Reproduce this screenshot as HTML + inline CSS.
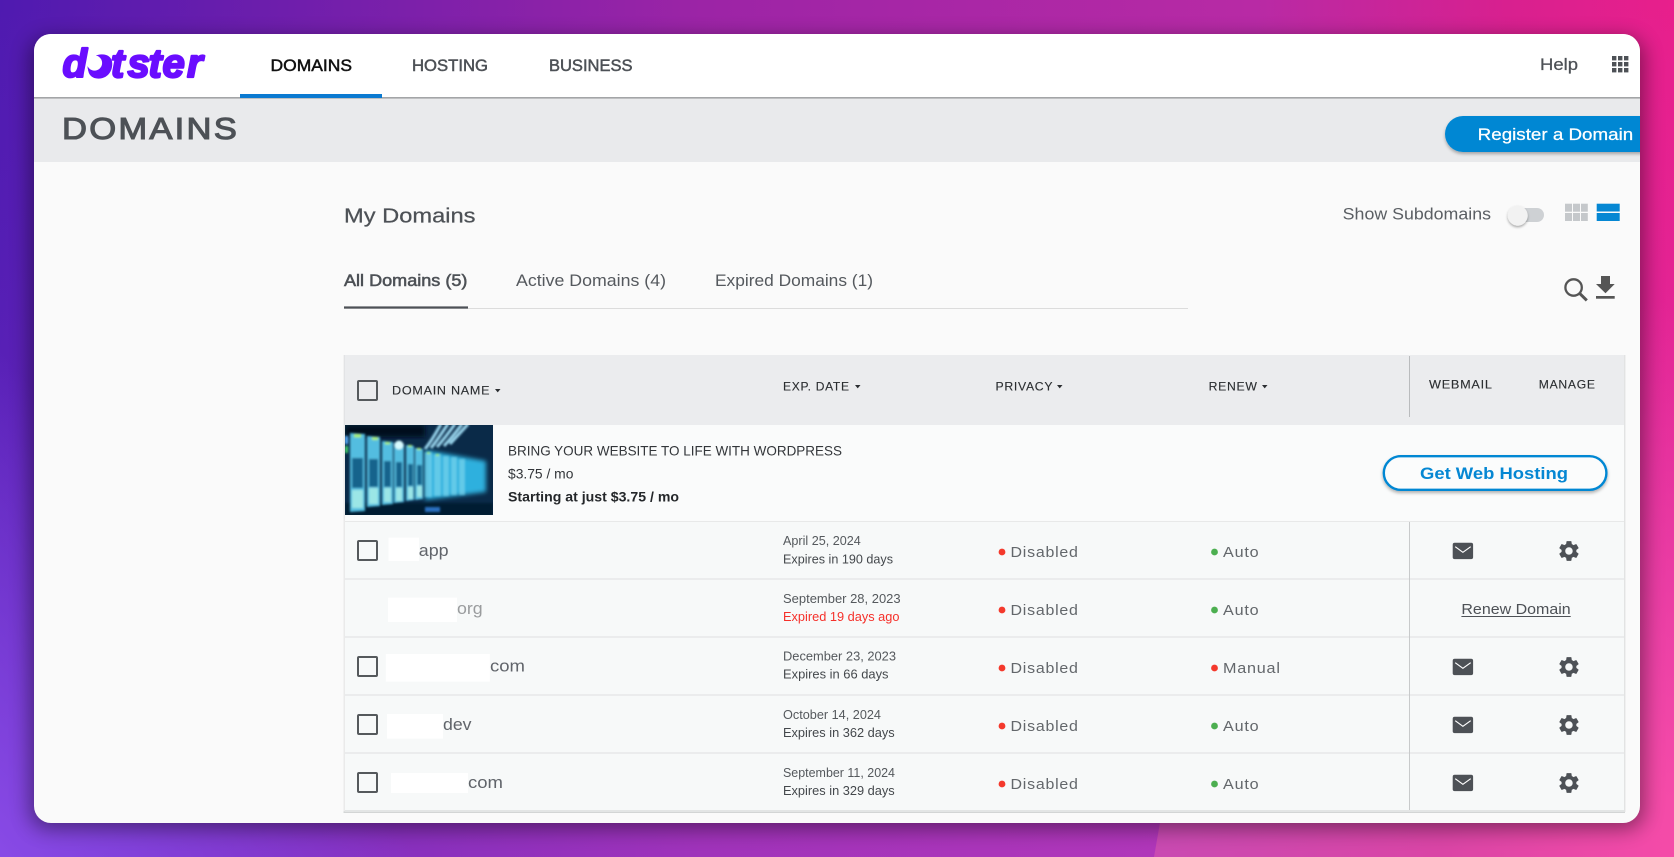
<!DOCTYPE html>
<html lang="en"><head><meta charset="utf-8"><title>Dotster Domains</title>
<style>
html,body{margin:0;padding:0;width:1674px;height:857px;overflow:hidden;background:#8a2ab0}
svg{display:block;position:absolute;left:0;top:0}
text{font-family:"Liberation Sans",sans-serif;white-space:pre}
.n{font-size:17px;fill:#4d5156;stroke:#4d5156;stroke-width:.5}
.l{font-size:17px;fill:#5a5e63}
.h{font-size:12px;fill:#2b2e31;stroke:#2b2e31;stroke-width:.12;letter-spacing:.7px}
.d1{font-size:12.5px;fill:#55595d}
.d2{font-size:12.5px;fill:#44484c}
.s{font-size:14.5px;fill:#63676b;letter-spacing:.7px}
.dm{font-size:17px;fill:#60646a}
</style></head><body>
<svg width="1674" height="857" viewBox="0 0 1674 857" xmlns="http://www.w3.org/2000/svg">
<defs>
<linearGradient id="bgx" x1="0" x2="1" y1="0" y2="0">
<stop offset="0" stop-color="#4f1ab0"/><stop offset=".42" stop-color="#9c24a6"/><stop offset=".75" stop-color="#b82aa5"/><stop offset=".9" stop-color="#d8208f"/><stop offset="1" stop-color="#e81f8c"/>
</linearGradient>
<linearGradient id="bgy" x1="0" x2="0" y1="0" y2="1">
<stop offset="0" stop-color="#aa5af0" stop-opacity="0"/><stop offset=".3" stop-color="#aa5af0" stop-opacity=".06"/><stop offset="1" stop-color="#aa5af0" stop-opacity=".28"/>
</linearGradient>
<linearGradient id="bgl" gradientUnits="userSpaceOnUse" x1="0" y1="857" x2="250" y2="650">
<stop offset="0" stop-color="#8a4ce8" stop-opacity=".95"/><stop offset="1" stop-color="#8a4ce8" stop-opacity="0"/>
</linearGradient>
<linearGradient id="bgp" x1="0" x2="1" y1="0" y2="0">
<stop offset="0" stop-color="#c94ab2"/><stop offset=".55" stop-color="#da45a6"/><stop offset="1" stop-color="#f54ba8"/>
</linearGradient>
<linearGradient id="bgp2" x1="0" x2="0" y1="0" y2="1">
<stop offset="0" stop-color="#f54ba8" stop-opacity="0"/><stop offset="1" stop-color="#f54ba8" stop-opacity="1"/>
</linearGradient>
<clipPath id="win"><rect x="34" y="34" width="1606" height="789" rx="17"/></clipPath>
<filter id="wsh" x="-5%" y="-5%" width="110%" height="110%"><feGaussianBlur stdDeviation="10"/></filter>
<filter id="bsh" x="-10%" y="-30%" width="120%" height="170%"><feDropShadow dx="0" dy="2" stdDeviation="1.6" flood-color="#000" flood-opacity=".3"/></filter>
<filter id="ks" x="-50%" y="-50%" width="200%" height="200%"><feDropShadow dx="0" dy="1.5" stdDeviation="1.3" flood-color="#000" flood-opacity=".35"/></filter>
<filter id="b1" x="-10%" y="-10%" width="120%" height="120%"><feGaussianBlur stdDeviation="1"/></filter>
<filter id="b3" x="-20%" y="-20%" width="140%" height="140%"><feGaussianBlur stdDeviation="2.5"/></filter>
<clipPath id="img"><rect x="345" y="425" width="148" height="90"/></clipPath>
<g id="mail"><rect x="0" y="0" width="20.4" height="16.4" rx="2" fill="#4d5156"/><path d="M2.5 4l7.7 5.6 7.8-5.6" fill="none" stroke="#fff" stroke-width="1.2"/></g>
<path id="gear" fill="#4d5156" fill-rule="evenodd" d="M19.14 12.94c.04-.3.06-.61.06-.94 0-.32-.02-.64-.07-.94l2.03-1.58c.18-.14.23-.41.12-.61l-1.92-3.32c-.12-.22-.37-.29-.59-.22l-2.39.96c-.5-.38-1.03-.7-1.62-.94l-.36-2.54c-.04-.24-.24-.41-.48-.41h-3.84c-.24 0-.43.17-.47.41l-.36 2.54c-.59.24-1.13.57-1.62.94l-2.39-.96c-.22-.08-.47 0-.59.22L2.74 8.87c-.12.21-.08.47.12.61l2.03 1.58c-.05.3-.09.63-.09.94s.02.64.07.94l-2.03 1.58c-.18.14-.23.41-.12.61l1.92 3.32c.12.22.37.29.59.22l2.39-.96c.5.38 1.03.7 1.62.94l.36 2.54c.05.24.24.41.48.41h3.84c.24 0 .44-.17.47-.41l.36-2.54c.59-.24 1.13-.56 1.62-.94l2.39.96c.22.08.47 0 .59-.22l1.92-3.32c.12-.22.07-.47-.12-.61l-2.01-1.58zM12 15.6c-1.98 0-3.6-1.62-3.6-3.6s1.62-3.6 3.6-3.6 3.6 1.62 3.6 3.6-1.62 3.6-3.6 3.6z"/>
<rect id="cb" x="0" y="0" width="19" height="19" rx="1" fill="none" stroke="#55595c" stroke-width="2"/>
</defs>

<!-- background -->
<rect width="1674" height="857" fill="url(#bgx)"/>
<rect width="1674" height="857" fill="url(#bgy)"/>
<rect width="600" height="857" fill="url(#bgl)"/>
<rect x="1640" y="300" width="34" height="500" fill="url(#bgp2)"/>
<polygon points="1164,800 1674,800 1674,857 1154,857" fill="url(#bgp)"/>
<rect x="30" y="38" width="1614" height="791" rx="18" fill="#000" opacity=".42" filter="url(#wsh)"/>

<g clip-path="url(#win)">
<rect x="34" y="34" width="1606" height="789" fill="#fafafa"/>
<!-- header -->
<rect x="34" y="34" width="1606" height="63" fill="#fff"/>
<rect x="34" y="97" width="1606" height="65" fill="#e9eaec"/>
<rect x="34" y="97" width="1606" height="1.6" fill="#a3a5a7"/>
<rect x="240" y="94" width="142" height="4" fill="#0b7ad1"/>

<!-- logo -->
<circle cx="99" cy="66.5" r="11.5" fill="#6a0dff"/>
<text x="62.5 88 111 127.5 148.5 162.5 187" y="77" font-size="40" font-weight="700" font-style="italic" fill="#6a0dff" stroke="#6a0dff" stroke-width="2.2" stroke-linejoin="round" style="font-weight:700;font-style:italic">dotster</text>
<circle cx="94.5" cy="63" r="7.6" fill="#fff"/>

<!-- nav -->
<text x="270.5" y="71" font-size="17" fill="#111" stroke="#111" stroke-width=".5" textLength="81.5" lengthAdjust="spacingAndGlyphs">DOMAINS</text>
<text class="n" x="412" y="71" textLength="76" lengthAdjust="spacingAndGlyphs">HOSTING</text>
<text class="n" x="549" y="71" textLength="83.5" lengthAdjust="spacingAndGlyphs">BUSINESS</text>
<text class="n" x="1540" y="70" textLength="38" lengthAdjust="spacingAndGlyphs" style="stroke-width:.25">Help</text>
<g fill="#4d5156">
<rect x="1612" y="56" width="4.4" height="4.4"/><rect x="1618" y="56" width="4.4" height="4.4"/><rect x="1624" y="56" width="4.4" height="4.4"/>
<rect x="1612" y="62" width="4.4" height="4.4"/><rect x="1618" y="62" width="4.4" height="4.4"/><rect x="1624" y="62" width="4.4" height="4.4"/>
<rect x="1612" y="68" width="4.4" height="4.4"/><rect x="1618" y="68" width="4.4" height="4.4"/><rect x="1624" y="68" width="4.4" height="4.4"/>
</g>

<!-- title -->
<text x="62" y="139" font-size="31" fill="#4d5156" stroke="#4d5156" stroke-width="1.1" style="letter-spacing:2px" textLength="177" lengthAdjust="spacingAndGlyphs">DOMAINS</text>
<rect x="1445" y="116" width="240" height="36" rx="18" fill="#0587d3" filter="url(#bsh)"/>
<text x="1477.7" y="140" font-size="17" fill="#fff" stroke="#fff" stroke-width=".25" textLength="155.5" lengthAdjust="spacingAndGlyphs">Register a Domain</text>

<!-- my domains -->
<text x="344" y="222.5" font-size="20" fill="#4d5156" stroke="#4d5156" stroke-width=".25" textLength="131.5" lengthAdjust="spacingAndGlyphs">My Domains</text>
<text class="l" x="1342.7" y="219.3" textLength="148.3" lengthAdjust="spacingAndGlyphs">Show Subdomains</text>
<rect x="1508" y="208" width="36" height="14" rx="7" fill="#ced1d4"/>
<circle cx="1517.7" cy="215.6" r="10" fill="#f2f2f2" filter="url(#ks)"/>
<g fill="#c5c8cb">
<rect x="1565" y="203.7" width="7" height="8"/><rect x="1573" y="203.7" width="7" height="8"/><rect x="1581" y="203.7" width="6.8" height="8"/>
<rect x="1565" y="213" width="7" height="8"/><rect x="1573" y="213" width="7" height="8"/><rect x="1581" y="213" width="6.8" height="8"/>
</g>
<rect x="1596.7" y="203.7" width="23" height="7.8" fill="#0587d3"/>
<rect x="1596.7" y="213" width="23" height="8" fill="#0587d3"/>

<!-- tabs -->
<text x="344" y="286" font-size="16.5" fill="#4d5156" stroke="#4d5156" stroke-width=".55" textLength="123.4" lengthAdjust="spacingAndGlyphs">All Domains (5)</text>
<text x="516" y="286" font-size="16.5" fill="#55595e" textLength="150" lengthAdjust="spacingAndGlyphs">Active Domains (4)</text>
<text x="715" y="286" font-size="16.5" fill="#55595e" textLength="158" lengthAdjust="spacingAndGlyphs">Expired Domains (1)</text>
<rect x="344" y="308" width="844" height="1" fill="#dcdcdc"/>
<rect x="344" y="306.4" width="124" height="2.2" fill="#4d5156"/>
<circle cx="1573.6" cy="287.5" r="8.2" fill="none" stroke="#555" stroke-width="2.3"/>
<path d="M1579.8 293.6l7 6.8" stroke="#555" stroke-width="3" fill="none"/>
<path d="M1601 276h9v8h4.7l-9.2 9.2-9.5-9.2h5z" fill="#555"/>
<rect x="1596" y="296" width="18.7" height="2.7" fill="#555"/>

<!-- table -->
<rect x="343.5" y="355" width="1281.5" height="457" fill="#eaeaea"/>
<rect x="343.5" y="811.5" width="1281.5" height="1.4" fill="#cfd1d1"/>
<rect x="1624" y="355" width="1.4" height="457" fill="#e2e3e3"/>
<rect x="345" y="355" width="1279" height="70" fill="#ebecee"/>
<rect x="344" y="355" width="1" height="70" fill="#e2e3e5"/>
<use href="#cb" x="358" y="381"/>
<text class="h" x="392" y="394.3" textLength="98.3" lengthAdjust="spacingAndGlyphs">DOMAIN NAME</text>
<polygon points="495,389 500.5,389 497.7,392.4" fill="#2b2e31"/>
<text class="h" x="783" y="390.3" textLength="66.7" lengthAdjust="spacingAndGlyphs">EXP. DATE</text>
<polygon points="855,385 860.5,385 857.7,388.4" fill="#2b2e31"/>
<text class="h" x="995.5" y="390.3" textLength="57.7" lengthAdjust="spacingAndGlyphs">PRIVACY</text>
<polygon points="1057,385 1062.5,385 1059.7,388.4" fill="#2b2e31"/>
<text class="h" x="1208.6" y="390.3" textLength="49.1" lengthAdjust="spacingAndGlyphs">RENEW</text>
<polygon points="1262,385 1267.5,385 1264.7,388.4" fill="#2b2e31"/>
<rect x="1409" y="356" width="1" height="61" fill="#b9bbbd"/>
<text class="h" x="1429" y="388.3" textLength="63.7" lengthAdjust="spacingAndGlyphs">WEBMAIL</text>
<text class="h" x="1538.8" y="388.3" textLength="56.9" lengthAdjust="spacingAndGlyphs">MANAGE</text>

<!-- promo -->
<rect x="345" y="425" width="1279" height="96" fill="#fafbfb"/>
<g clip-path="url(#img)">
<rect x="345" y="425" width="148" height="90" fill="#0a2a48"/>
<rect x="345" y="425" width="80" height="12" fill="#050f1c" filter="url(#b3)"/>
<rect x="345" y="503" width="148" height="13" fill="#061a30" filter="url(#b1)"/>
<g filter="url(#b3)"><polygon points="425,450 486,461 486,492 425,500" fill="#2fb0de"/></g>
<g filter="url(#b1)">
<g fill="#52bde0">
<polygon points="350,433 365,434 365,511 350,512"/>
<polygon points="367,436 380,437 380,506 367,507"/>
<polygon points="382,441 393,442 393,504 382,505"/>
<polygon points="394,443 404,444 404,502 394,503"/>
<polygon points="406,445 414,446 414,500 406,501"/>
<polygon points="415,448 423,449 423,499 415,500"/>
</g>
<g fill="#7ed8ee" opacity=".65">
<rect x="425" y="452" width="7" height="45"/>
<rect x="434" y="454" width="7" height="42"/>
<rect x="443" y="456" width="6" height="40"/>
<rect x="451" y="457" width="6" height="38"/>
<rect x="459" y="459" width="6" height="36"/>
</g>
<g fill="#14648c">
<rect x="352" y="458" width="11" height="30"/>
<rect x="369" y="459" width="9" height="28"/>
<rect x="384" y="461" width="7" height="26"/>
<rect x="396" y="462" width="6" height="25"/>
<rect x="408" y="464" width="5" height="22"/>
<rect x="417" y="465" width="5" height="20"/>
</g>
<g fill="#9be6e6">
<rect x="352" y="490" width="11" height="18"/>
<rect x="369" y="488" width="9" height="16"/>
<rect x="384" y="488" width="7" height="14"/>
<rect x="396" y="488" width="6" height="13"/>
<rect x="408" y="487" width="5" height="12"/>
<rect x="417" y="486" width="5" height="11"/>
</g>
<g fill="#a9ee70">
<rect x="354" y="434" width="7" height="3.4"/>
<rect x="372" y="437" width="6" height="3"/>
<rect x="385" y="442" width="5" height="2.4"/>
<rect x="408" y="445" width="4" height="2"/>
<rect x="417" y="448" width="4" height="2"/>
<rect x="427" y="452" width="3" height="2"/>
<rect x="436" y="454" width="3" height="2"/>
</g>
<rect x="345" y="436" width="3" height="8" fill="#5cb0ff"/>
<rect x="345" y="446" width="3" height="7" fill="#45d06a"/>
<circle cx="399" cy="445" r="4.5" fill="#d8fbff"/>
<g fill="none" stroke="#9ad6ee" stroke-width="3">
<path d="M425 449C433 439 437 431 441 424"/>
<path d="M431 448C439 438 443 431 448 424"/>
<path d="M437 447C445 438 450 431 455 424"/>
<path d="M444 446C451 438 457 431 462 424"/>
<path d="M450 444C457 436 463 430 468 424"/>
</g>
<rect x="425" y="507" width="15" height="5" fill="#2a70c0"/>
</g>
</g>
<text x="508" y="455.3" font-size="14" fill="#33363a" textLength="334" lengthAdjust="spacingAndGlyphs">BRING YOUR WEBSITE TO LIFE WITH WORDPRESS</text>
<text x="508" y="478.3" font-size="14" fill="#33363a" textLength="65.4" lengthAdjust="spacingAndGlyphs">$3.75 / mo</text>
<text x="508" y="501.3" font-size="13.5" font-weight="700" fill="#24272a" style="font-weight:700" textLength="171" lengthAdjust="spacingAndGlyphs">Starting at just $3.75 / mo</text>
<rect x="1383.8" y="456.2" width="222.6" height="33.6" rx="16.8" fill="#fbfcfc" stroke="#0587d3" stroke-width="2.4" filter="url(#bsh)"/>
<text x="1420" y="479" font-size="17" font-weight="700" fill="#0587d3" style="font-weight:700" textLength="148" lengthAdjust="spacingAndGlyphs">Get Web Hosting</text>

<!-- rows -->
<rect x="345" y="521" width="1279" height="1.4" fill="#e8e9e9"/>
<rect x="345" y="522" width="1279" height="289" fill="#f7f9f9"/>
<rect x="345" y="578" width="1279" height="2" fill="#ebeced"/>
<rect x="345" y="636" width="1279" height="2" fill="#ebeced"/>
<rect x="345" y="694" width="1279" height="2" fill="#ebeced"/>
<rect x="345" y="752" width="1279" height="2" fill="#ebeced"/>
<rect x="345" y="810" width="1279" height="2" fill="#e3e5e5"/>
<rect x="1409" y="522" width="1" height="288" fill="#c8cacb"/>

<!-- redaction + names -->
<rect x="388.5" y="537.7" width="30.5" height="23.3" fill="#fff"/>
<rect x="388" y="597.7" width="69" height="24.3" fill="#fff"/>
<rect x="385.8" y="654" width="104" height="27.7" fill="#fff"/>
<rect x="387" y="714" width="56" height="24.7" fill="#fff"/>
<rect x="391" y="773" width="77" height="20" fill="#fff"/>
<text class="dm" x="418.8" y="556" textLength="29.8" lengthAdjust="spacingAndGlyphs">app</text>
<text class="dm" x="457" y="614" textLength="25.7" lengthAdjust="spacingAndGlyphs" style="fill:#9a9c9e">org</text>
<text class="dm" x="490" y="671.7" textLength="35" lengthAdjust="spacingAndGlyphs">com</text>
<text class="dm" x="443" y="730" textLength="28.5" lengthAdjust="spacingAndGlyphs">dev</text>
<text class="dm" x="468" y="788" textLength="35" lengthAdjust="spacingAndGlyphs">com</text>
<use href="#cb" x="358" y="541"/>
<use href="#cb" x="358" y="657"/>
<use href="#cb" x="358" y="715"/>
<use href="#cb" x="358" y="773"/>

<!-- dates -->
<text class="d1" x="783" y="545" textLength="77.8" lengthAdjust="spacingAndGlyphs">April 25, 2024</text>
<text class="d2" x="783" y="563.3" textLength="110" lengthAdjust="spacingAndGlyphs">Expires in 190 days</text>
<text class="d1" x="783" y="603" textLength="117.6" lengthAdjust="spacingAndGlyphs">September 28, 2023</text>
<text class="d2" x="783" y="621" textLength="116.5" lengthAdjust="spacingAndGlyphs" style="fill:#f5302a">Expired 19 days ago</text>
<text class="d1" x="783" y="660.7" textLength="113" lengthAdjust="spacingAndGlyphs">December 23, 2023</text>
<text class="d2" x="783" y="678.7" textLength="105.5" lengthAdjust="spacingAndGlyphs">Expires in 66 days</text>
<text class="d1" x="783" y="719" textLength="98" lengthAdjust="spacingAndGlyphs">October 14, 2024</text>
<text class="d2" x="783" y="737" textLength="111.7" lengthAdjust="spacingAndGlyphs">Expires in 362 days</text>
<text class="d1" x="783" y="777" textLength="112" lengthAdjust="spacingAndGlyphs">September 11, 2024</text>
<text class="d2" x="783" y="795" textLength="111.7" lengthAdjust="spacingAndGlyphs">Expires in 329 days</text>

<!-- privacy -->
<g fill="#f4392c"><circle cx="1002" cy="552" r="3.4"/><circle cx="1002" cy="610" r="3.4"/><circle cx="1002" cy="668" r="3.4"/><circle cx="1002" cy="726" r="3.4"/><circle cx="1002" cy="784" r="3.4"/></g>
<text class="s" x="1010.5" y="557" textLength="68.2" lengthAdjust="spacingAndGlyphs">Disabled</text>
<text class="s" x="1010.5" y="615" textLength="68.2" lengthAdjust="spacingAndGlyphs">Disabled</text>
<text class="s" x="1010.5" y="673" textLength="68.2" lengthAdjust="spacingAndGlyphs">Disabled</text>
<text class="s" x="1010.5" y="731" textLength="68.2" lengthAdjust="spacingAndGlyphs">Disabled</text>
<text class="s" x="1010.5" y="789" textLength="68.2" lengthAdjust="spacingAndGlyphs">Disabled</text>

<!-- renew -->
<g fill="#4caf50"><circle cx="1214.5" cy="552" r="3.4"/><circle cx="1214.5" cy="610" r="3.4"/><circle cx="1214.5" cy="726" r="3.4"/><circle cx="1214.5" cy="784" r="3.4"/></g>
<circle cx="1214.5" cy="668" r="3.4" fill="#f4392c"/>
<text class="s" x="1223" y="557" textLength="36.4" lengthAdjust="spacingAndGlyphs">Auto</text>
<text class="s" x="1223" y="615" textLength="36.4" lengthAdjust="spacingAndGlyphs">Auto</text>
<text class="s" x="1223" y="673" textLength="57.7" lengthAdjust="spacingAndGlyphs">Manual</text>
<text class="s" x="1223" y="731" textLength="36.4" lengthAdjust="spacingAndGlyphs">Auto</text>
<text class="s" x="1223" y="789" textLength="36.4" lengthAdjust="spacingAndGlyphs">Auto</text>

<!-- actions -->
<use href="#mail" x="1452.7" y="542.7"/>
<use href="#mail" x="1452.7" y="658.7"/>
<use href="#mail" x="1452.7" y="716.7"/>
<use href="#mail" x="1452.7" y="774.7"/>
<use href="#gear" transform="translate(1556.6 538.6) scale(1.03)"/>
<use href="#gear" transform="translate(1556.6 654.6) scale(1.03)"/>
<use href="#gear" transform="translate(1556.6 712.6) scale(1.03)"/>
<use href="#gear" transform="translate(1556.6 770.6) scale(1.03)"/>
<text x="1461.4" y="614" font-size="14.5" fill="#4d5156" textLength="109.3" lengthAdjust="spacingAndGlyphs">Renew Domain</text>
<rect x="1461.4" y="616" width="109.3" height="1" fill="#4d5156"/>
</g>
</svg>
</body></html>
